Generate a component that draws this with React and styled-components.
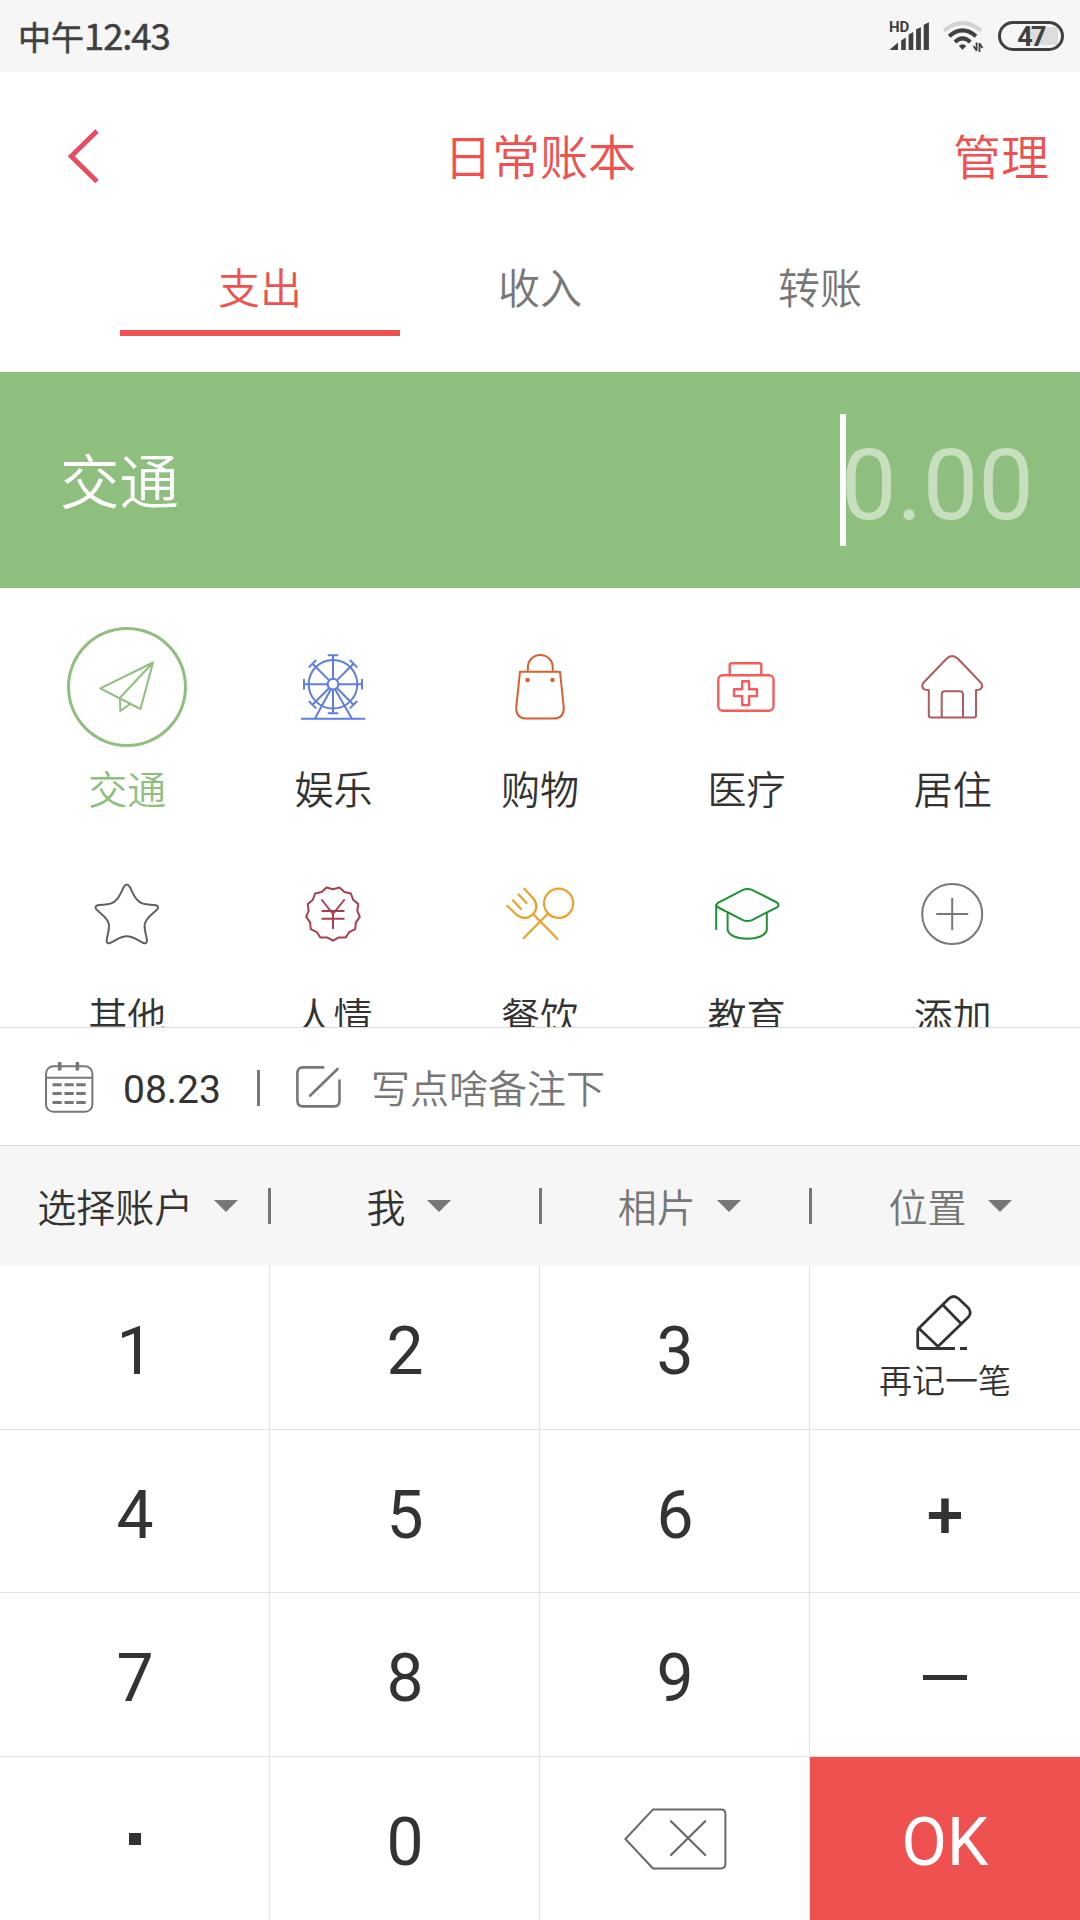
import React from "react";
import styled, { createGlobalStyle } from "styled-components";

const CJK = `"Noto Sans CJK SC", sans-serif`;
const LATIN = `Roboto, "Noto Sans CJK SC", sans-serif`;
const RED = "#ee5150";
const GREEN = "#8fbf7f";
const INK = "#333333";
const GREY = "#777777";
const PANEL = "#f6f6f6";

const GlobalStyle = createGlobalStyle`
  * { box-sizing: border-box; }
  body { margin: 0; background: #fff; }
  svg { display: block; flex: none; }
  button { font: inherit; border: 0; background: none; padding: 0; margin: 0; color: inherit; }
`;

const Screen = styled.div`
  width: 1080px;
  height: 1920px;
  display: flex;
  flex-direction: column;
  overflow: hidden;
  background: #fff;
  color: ${INK};
  font-family: ${CJK};
  font-weight: 350;
`;

/* Status bar */
const StatusBar = styled.div`
  height: 72px;
  display: flex;
  align-items: center;
  justify-content: space-between;
  padding: 0 16px 0 18px;
  background: ${PANEL};
  color: #404040;
`;
const Clock = styled.div`
  display: flex;
  align-items: center;
  font-size: 33px;
  line-height: 40px;
  font-weight: 400;
  -webkit-text-stroke: 0.5px #404040;
`;
const ClockDigits = styled.span`
  font-size: 36.5px;
  padding-bottom: 2px;
  letter-spacing: -1.1px;
`;
const StatusIcons = styled.div`
  display: flex;
  align-items: center;
`;
const WifiSlot = styled.div`
  margin: 0 14px 0 12px;
`;
const Battery = styled.div`
  width: 66px;
  height: 30px;
  padding: 1px 0 0;
  border: 3px solid #404040;
  border-radius: 15px;
  display: flex;
  align-items: center;
  justify-content: center;
  background: linear-gradient(90deg, ${PANEL} 0 29px, #dddddd 29px) no-repeat 0 3px / 57px 18px;
  font: 700 27px/24px ${LATIN};
  letter-spacing: -1.8px;
`;

/* Header */
const Header = styled.header`
  height: 164px;
  display: grid;
  grid-template-columns: 1fr auto 1fr;
  align-items: center;
  padding: 0 31px 0 67px;
  color: ${RED};
  font-size: 48px;
  line-height: 60px;
`;
const BackButton = styled.button`
  padding-top: 4px;
`;
const Title = styled.h1`
  margin: 0;
  font: inherit;
  padding-right: 36px;
`;
const Manage = styled.button`
  justify-self: end;
`;
const Tabs = styled.nav`
  height: 136px;
  display: flex;
  padding: 0 120px 36px;
`;
const Tab = styled.button`
  flex: 1;
  display: flex;
  align-items: center;
  justify-content: center;
  padding-top: 6px;
  border-bottom: 6px solid ${(p) => (p.$active ? RED : "transparent")};
  color: ${(p) => (p.$active ? RED : GREY)};
  font-size: 42px;
  line-height: 50px;
`;

/* Amount */
const AmountBar = styled.section`
  height: 216px;
  display: flex;
  align-items: center;
  justify-content: space-between;
  padding: 0 46px 0 60px;
  background: ${GREEN};
  color: #fff;
`;
const AmountLabel = styled.div`
  font-size: 59.5px;
  line-height: 80px;
  padding-bottom: 5px;
`;
const AmountInput = styled.div`
  display: flex;
  align-items: center;
`;
const Caret = styled.div`
  width: 6px;
  height: 132px;
  margin-right: -5px;
  background: #fff;
`;
const AmountValue = styled.div`
  padding-top: 9px;
  color: rgba(255, 255, 255, 0.5);
  font: 400 99px/120px ${LATIN};
`;

/* Categories */
const Categories = styled.section`
  height: 439px;
  flex: none;
  overflow: hidden;
  display: grid;
  grid-template-columns: repeat(5, 1fr);
  grid-auto-rows: 186px;
  row-gap: 41px;
  padding: 39px 24px 0;
`;
const Category = styled.div`
  display: flex;
  flex-direction: column;
  align-items: center;
  gap: 15px;
  color: ${(p) => (p.$active ? GREEN : INK)};
  font-size: 39px;
  line-height: 50px;
`;
const IconRing = styled.div`
  width: 120px;
  height: 120px;
  border-radius: 50%;
  box-shadow: ${(p) => (p.$active ? `inset 0 0 0 3px ${GREEN}` : "none")};
`;

/* Note row */
const NoteRow = styled.section`
  height: 119px;
  flex: none;
  display: flex;
  align-items: center;
  padding: 0 45px;
  border-top: 1px solid #dcdcdc;
  border-bottom: 1px solid #dcdcdc;
`;
const CalendarSlot = styled.div`
  padding-top: 2px;
`;
const DateText = styled.span`
  width: 134px;
  margin-left: 29px;
  padding-top: 6px;
  font: 400 39px/46px ${LATIN};
`;
const Divider = styled.span`
  flex: none;
  width: 3px;
  height: 36px;
  background: ${GREY};
`;
const NoteDivider = styled(Divider)`
  margin-top: 2px;
`;
const NoteIcon = styled.div`
  margin: 0 30px 0 36px;
`;
const Placeholder = styled.span`
  padding-bottom: 2px;
  color: ${GREY};
  font-size: 39px;
  line-height: 50px;
`;

/* Option bar */
const Options = styled.section`
  height: 120px;
  flex: none;
  display: flex;
  align-items: center;
  background: ${PANEL};
`;
const Option = styled.div`
  flex: 1;
  display: flex;
  align-items: center;
  justify-content: center;
  gap: 21px;
  padding-left: 8px;
  color: ${(p) => (p.$muted ? GREY : INK)};
  font-size: 39px;
  line-height: 50px;
`;
const OptionLabel = styled.span`
  padding-bottom: 3px;
`;
const Triangle = styled.span`
  border: 12px solid transparent;
  border-top-color: ${GREY};
  border-bottom-width: 0;
`;

/* Keypad */
const Keypad = styled.section`
  flex: 1;
  display: grid;
  grid-template-columns: repeat(4, 270px);
  grid-template-rows: 164px 163px 164px 163px;
`;
const Key = styled.button`
  display: flex;
  flex-direction: column;
  align-items: center;
  justify-content: center;
  border-right: ${(p) => (p.$lastCol ? 0 : "1px solid #e2e2e2")};
  border-bottom: ${(p) => (p.$lastRow ? 0 : "1px solid #e2e2e2")};
  padding-top: ${(p) => p.$drop ?? 9}px;
  padding-left: ${(p) => (p.$lastCol ? 0 : 1)}px;
  background: ${(p) => (p.$primary ? RED : "#fff")};
  color: ${(p) => (p.$primary ? "#fff" : INK)};
  font: ${(p) => (p.$strong ? 500 : 400)} 66px/78px ${LATIN};
`;
const DotMark = styled.span`
  width: 12px;
  height: 12px;
  background: ${INK};
`;
const MinusMark = styled.span`
  width: 44px;
  height: 5px;
  background: ${INK};
`;
const PencilSlot = styled.div`
  padding-right: 3px;
`;
const KeyCaption = styled.span`
  margin-top: 6px;
  font: 350 33px/44px ${CJK};
`;

const Line = ({ color, width = 2, children }) => (
  <svg width="120" height="120" viewBox="0 0 120 120" fill="none" stroke={color} strokeWidth={width} strokeLinecap="round" strokeLinejoin="round">
    {children}
  </svg>
);

const SPOKES = [0, 45, 90, 135, 180, 225, 270, 315];
const BADGE = Array.from({ length: 26 }, (_, i) => {
  const r = i % 2 ? 24.5 : 27;
  const a = (i * Math.PI) / 13;
  return `${(59 + r * Math.sin(a)).toFixed(2)},${(59.7 + r * Math.cos(a)).toFixed(2)}`;
}).join(" ");

const icons = {
  plane: (
    <Line color={GREEN}>
      <path d="M86 35.5 33.3 61.3 73.5 82Z M86 35.5 53 70.7 53.3 84 63 77" />
    </Line>
  ),
  wheel: (
    <Line color="#5f7ee0">
      <circle cx="59" cy="57.2" r="24.3" />
      <circle cx="59" cy="57.2" r="5.4" />
      {SPOKES.map((a) => (
        <path key={a} transform={`rotate(${a} 59 57.2)`} d="M59 51.8V28.2M54.5 28.2H63.5" />
      ))}
      <path d="M27.8 91.7H90.5 M56.8 62.5 41.2 91 M61.2 62.5 77.5 91" />
    </Line>
  ),
  bag: (
    <Line color="#d9602f">
      <path d="M47.9 43V40A12.4 12 0 0 1 72.7 40V43 M40 44.7H80L83.8 81Q83.8 91.6 73.5 91.6H46.5Q36.2 91.6 36.2 81Z" />
      <circle cx="47.5" cy="53" r="1.2" fill="#d9602f" />
      <circle cx="72.5" cy="53" r="1.2" fill="#d9602f" />
    </Line>
  ),
  medkit: (
    <Line color="#f65c5c" width={2.4}>
      <rect x="32.3" y="48.3" width="55.2" height="35.5" rx="4.5" />
      <path d="M43.7 48V38.2Q43.7 36.2 45.7 36.2H73.3Q75.3 36.2 75.3 38.2V48" />
      <path d="M56.2 54.2H63.1V62.2H71V69.1H63.1V78.1H56.2V69.1H48V62.2H56.2Z" />
    </Line>
  ),
  house: (
    <Line color="#b25a60">
      <path d="M53.5 31.8Q59.2 26 64.9 31.8L88.2 56Q90.5 60 87 62.4Q85.5 63 83 63V88.3Q83 90.5 81 90.5H38Q35.8 90.5 35.8 88.3V63Q33 63 31.4 62.4Q28 60 30.2 56Z" />
      <path d="M48.7 90V67.5Q48.7 64.2 52 64.2H66.6Q70 64.2 70 67.5V90" />
    </Line>
  ),
  star: (
    <Line color="#606060">
      <path d="M56.8 33Q59.8 28 62.8 33C66.8 41 69 47.5 76 49.6C81 51 85 50.3 89 51.3Q92.5 52.5 90.2 55.4C86 60 78.5 63.5 77.6 71C77.3 77 79.5 82 80 86.5Q79.8 90 76.5 89C71 87 67 82.3 59.8 82.3C52.6 82.3 48.6 87 43.1 89Q39.8 90 39.6 86.5C40.1 82 42.3 77 42 71C41.1 63.5 33.6 60 29.4 55.4Q27.1 52.5 30.6 51.3C34.6 50.3 38.6 51 43.6 49.6C50.6 47.5 52.8 41 56.8 33Z" />
    </Line>
  ),
  badge: (
    <Line color="#a83f50">
      <polygon points={BADGE} />
      <path d="M47.9 46 59 60 70.1 46 M59 60V74.3 M48.3 57H69.7 M48.3 64.7H69.7" />
    </Line>
  ),
  dining: (
    <Line color="#f0a02a" width={2.2}>
      <circle cx="78.6" cy="49.3" r="14.6" />
      <path d="M68 59.5 43.6 84.3 M53 60 77.5 85 M44.3 34.7 52.6 43.8C57.5 49 57.5 56 53 60C48.5 65 41.5 65 36.5 60.7L27.2 51.7 M38.6 40.5 46.4 49 M32.9 46.3 41 55" />
    </Line>
  ),
  cap: (
    <Line color="#219035">
      <path d="M56.5 36.2Q61.5 33.8 66.5 36.2L91 48.5Q94 51 91 53.4L66.5 65.8Q61.5 68.4 56.5 65.8L31.5 53Q29.5 50.8 31.5 49.2Z" />
      <path d="M30.2 51V75 M41.6 59.5V76C43 81.5 51 84.8 61.2 84.8S79.6 81.5 80.8 76V59.5" />
    </Line>
  ),
  add: (
    <Line color={GREY}>
      <circle cx="59.2" cy="60" r="30" />
      <path strokeLinecap="butt" d="M43.3 60H75.2M59.2 44V76" />
    </Line>
  ),
};

const CATEGORIES = [
  ["plane", "交通"],
  ["wheel", "娱乐"],
  ["bag", "购物"],
  ["medkit", "医疗"],
  ["house", "居住"],
  ["star", "其他"],
  ["badge", "人情"],
  ["dining", "餐饮"],
  ["cap", "教育"],
  ["add", "添加"],
];

const Signal = () => (
  <svg width="42" height="36" viewBox="888 17 42 36" fill="#404040" overflow="visible">
    <text x="889" y="31" fontFamily="Roboto, sans-serif" fontWeight="700" fontSize="15">HD</text>
    <path d="M890 48.5 898 41.5V49H891Q890 49 890 48.5ZM901.2 39.5 905.8 36.5V49H901.2ZM908.6 33.5 913.3 31V49H908.6ZM916.1 28.3 920.9 26.3V49H916.1ZM923.7 23.7 928.9 21.3V49H923.7Z" />
  </svg>
);

const Wifi = () => (
  <svg width="42" height="34" viewBox="943 20 42 34" fill="none" strokeWidth="4">
    <path d="M945 31.8Q963.5 16.5 982.2 31.8" stroke="#d2d2d2" />
    <path d="M950.2 37.2Q963.5 25.5 977 37.2" stroke="#404040" />
    <path d="M956 43Q963.5 35.8 971.4 43" stroke="#404040" />
    <path d="M959.8 47Q963.5 43.3 967.3 47L963.6 50.8Z" fill="#404040" />
    <path d="M977.6 43.5V52M977.6 51.5 974.5 47M980.5 53V44M980.5 44.5 983.5 49" stroke="#404040" strokeWidth="1.8" />
  </svg>
);

const Back = () => (
  <svg width="32" height="56" viewBox="67 128 32 56" fill="none" stroke="#ea4a62" strokeWidth="4.8">
    <path d="M97 131 71.2 156.2 97 181.5" />
  </svg>
);

const Calendar = () => (
  <svg width="49" height="51" viewBox="0 0 49 51" fill="none" stroke={GREY} strokeWidth="2">
    <rect x="1" y="4.2" width="46.4" height="45.6" rx="7.5" />
    <path d="M1 15.7H47.4" />
    <path strokeWidth="3.5" d="M14.7 0V8.5M32.4 0V8.5" />
    <path strokeWidth="3" d="M7.5 22.7H16.7M19.5 22.7H28.7M31.3 22.7H40.7M7.5 31.5H16.7M19.5 31.5H28.7M31.3 31.5H40.7M7.5 40.6H16.7M19.5 40.6H28.7M31.3 40.6H40.7" />
  </svg>
);

const Compose = () => (
  <svg width="45" height="42" viewBox="0 0 45 42" fill="none" stroke={GREY} strokeWidth="2.6" strokeLinecap="round">
    <path d="M27.3 1.4H7Q1.4 1.4 1.4 7V34.6Q1.4 40.4 7 40.4H38Q43.5 40.4 43.5 34.6V14.5" />
    <path d="M41.5 3 14 29.7" />
  </svg>
);

const Pencil = () => (
  <svg width="56" height="56" viewBox="0 0 56 56" fill="none" stroke={INK} strokeWidth="2.8" strokeLinejoin="round">
    <path d="M39 53.5H4.5Q1.7 53.5 1.7 51V36Q1.7 34.5 2.8 33.3L32.7 3.8Q37.5 -0.8 42.7 3.8L52.4 13Q56 18 52.4 22L22 51.5 2.8 33.3 M26.9 10 45 28.5 M44 53.5H51" />
  </svg>
);

const Backspace = () => (
  <svg width="103" height="62" viewBox="0 0 103 62" fill="none" stroke="#686868" strokeWidth="2">
    <path d="M29 1.4H97Q101.4 1.4 101.4 5.8V56Q101.4 60.4 97 60.4H29L1.4 31Z" />
    <path strokeLinecap="round" strokeWidth="2.2" d="M47 13.2 81.2 47M81.2 13.2 47 47" />
  </svg>
);

export default function App() {
  return (
    <Screen>
      <GlobalStyle />
      <StatusBar>
        <Clock>
          中午<ClockDigits>12:43</ClockDigits>
        </Clock>
        <StatusIcons>
          <Signal />
          <WifiSlot>
            <Wifi />
          </WifiSlot>
          <Battery>47</Battery>
        </StatusIcons>
      </StatusBar>

      <Header>
        <BackButton>
          <Back />
        </BackButton>
        <Title>日常账本</Title>
        <Manage>管理</Manage>
      </Header>
      <Tabs>
        <Tab $active>支出</Tab>
        <Tab>收入</Tab>
        <Tab>转账</Tab>
      </Tabs>

      <AmountBar>
        <AmountLabel>交通</AmountLabel>
        <AmountInput>
          <Caret />
          <AmountValue>0.00</AmountValue>
        </AmountInput>
      </AmountBar>

      <Categories>
        {CATEGORIES.map(([icon, label], i) => (
          <Category key={icon} $active={i === 0}>
            <IconRing $active={i === 0}>{icons[icon]}</IconRing>
            {label}
          </Category>
        ))}
      </Categories>

      <NoteRow>
        <CalendarSlot>
          <Calendar />
        </CalendarSlot>
        <DateText>08.23</DateText>
        <NoteDivider />
        <NoteIcon>
          <Compose />
        </NoteIcon>
        <Placeholder>写点啥备注下</Placeholder>
      </NoteRow>

      <Options>
        <Option><OptionLabel>选择账户</OptionLabel><Triangle /></Option>
        <Divider />
        <Option><OptionLabel>我</OptionLabel><Triangle /></Option>
        <Divider />
        <Option $muted><OptionLabel>相片</OptionLabel><Triangle /></Option>
        <Divider />
        <Option $muted><OptionLabel>位置</OptionLabel><Triangle /></Option>
      </Options>

      <Keypad>
        <Key>1</Key>
        <Key>2</Key>
        <Key>3</Key>
        <Key $lastCol $drop={0}>
          <PencilSlot>
            <Pencil />
          </PencilSlot>
          <KeyCaption>再记一笔</KeyCaption>
        </Key>
        <Key>4</Key>
        <Key>5</Key>
        <Key>6</Key>
        <Key $lastCol $strong>+</Key>
        <Key>7</Key>
        <Key>8</Key>
        <Key>9</Key>
        <Key $lastCol $drop={5}><MinusMark /></Key>
        <Key $lastRow $drop={1}><DotMark /></Key>
        <Key $lastRow>0</Key>
        <Key $lastRow $drop={0}><Backspace /></Key>
        <Key $lastRow $lastCol $primary>OK</Key>
      </Keypad>
    </Screen>
  );
}
